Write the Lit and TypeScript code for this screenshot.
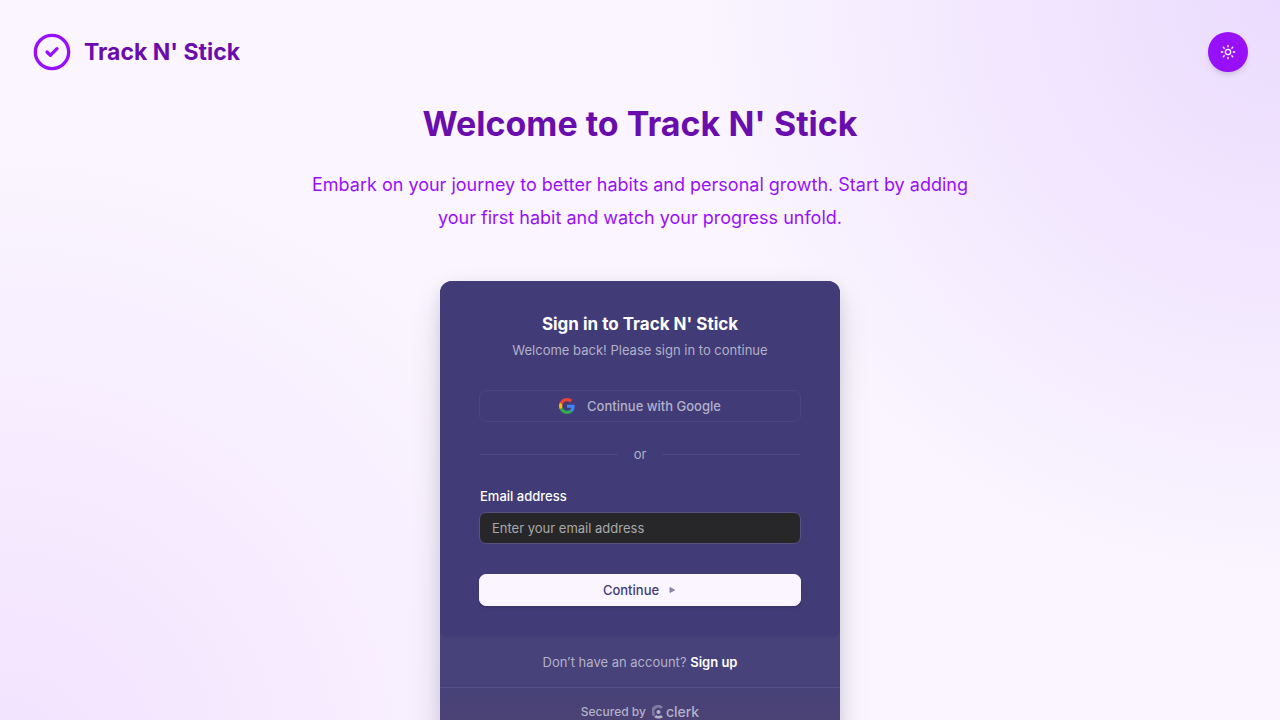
import { LitElement, html, css, svg } from "lit";
import { customElement, state } from "lit/decorators.js";

const checkLogo = svg`<svg class="logo" viewBox="0 0 24 24" fill="none" stroke="currentColor" stroke-width="2" stroke-linecap="round" stroke-linejoin="round" aria-hidden="true">
  <circle cx="12" cy="12" r="10"></circle><path d="m9 12 2 2 4-4"></path></svg>`;

const sun = svg`<svg class="sun" viewBox="0 0 24 24" fill="none" stroke="currentColor" stroke-width="2" stroke-linecap="round" stroke-linejoin="round" aria-hidden="true">
  <circle cx="12" cy="12" r="4"></circle>
  <path d="M12 2v2M12 20v2M4.93 4.93l1.41 1.41M17.66 17.66l1.41 1.41M2 12h2M20 12h2M6.34 17.66l-1.41 1.41M19.07 4.93l-1.41 1.41"></path></svg>`;

const google = svg`<svg class="google" viewBox="0 0 48 48" aria-hidden="true">
  <path fill="#EA4335" d="M24 9.5c3.54 0 6.71 1.22 9.21 3.6l6.85-6.85C35.9 2.38 30.47 0 24 0 14.62 0 6.51 5.38 2.56 13.22l7.98 6.19C12.43 13.72 17.74 9.5 24 9.5z"></path>
  <path fill="#4285F4" d="M46.98 24.55c0-1.57-.15-3.09-.38-4.55H24v9.02h12.94c-.58 2.96-2.26 5.48-4.78 7.18l7.73 6c4.51-4.18 7.09-10.36 7.09-17.65z"></path>
  <path fill="#FBBC05" d="M10.53 28.59c-.48-1.45-.76-2.99-.76-4.59s.27-3.14.76-4.59l-7.98-6.19C.92 16.46 0 20.12 0 24c0 3.88.92 7.54 2.56 10.78l7.97-6.19z"></path>
  <path fill="#34A853" d="M24 48c6.48 0 11.93-2.13 15.89-5.81l-7.73-6c-2.15 1.45-4.92 2.3-8.16 2.3-6.26 0-11.57-4.22-13.47-9.91l-7.98 6.19C6.51 42.62 14.62 48 24 48z"></path></svg>`;

const clerkMark = svg`<svg class="mark" viewBox="0 0 14 14" fill="currentColor" aria-hidden="true">
  <circle cx="7" cy="7" r="2.2"></circle>
  <path d="M11.6 12.1a.4.4 0 0 1 0 .6A7 7 0 0 1 7 14a7 7 0 0 1-4.300-1.300.4.4 0 0 1 0-.6l1.600-1.600a.5.5 0 0 1 .6 0A4.300 4.300 0 0 0 7 11.200a4.300 4.300 0 0 0 2.300-.7.5.5 0 0 1 .6 0z"></path>
  <path opacity=".5" d="M11.600 1.300a.4.4 0 0 1 0 .6L10 3.500a.5.5 0 0 1-.6 0 4.200 4.200 0 0 0-5.900 5.900.5.5 0 0 1 0 .6l-1.600 1.600a.4.4 0 0 1-.6 0A7 7 0 0 1 11.600 1.300z"></path></svg>`;

@customElement("app-root")
export class AppRoot extends LitElement {
  @state() private email = "";

  static styles = css`
    :host {
      display: block;
      min-height: 100vh;
      box-sizing: border-box;
      padding: 32px;
      overflow: hidden;
      font-family: Inter, "Open Sans", sans-serif;
      color: #6a0dad;
      background:
        radial-gradient(circle at 100% 0, #ebdbfe, rgba(250, 245, 255, 0) 580px),
        radial-gradient(circle at 0 100%, #f2e2fe, rgba(250, 245, 255, 0) 620px),
        #faf5ff;
    }
    * { box-sizing: border-box; }
    button, input { font: inherit; }
    a { color: inherit; text-decoration: none; }
    header {
      display: flex;
      align-items: center;
      justify-content: space-between;
      height: 40px;
    }
    .brand {
      display: flex;
      align-items: center;
      gap: 12px;
      font-size: 23px;
      line-height: 32px;
      font-weight: 700;
    }
    .logo { width: 40px; height: 40px; color: #9810fa; }
    .theme {
      display: grid;
      place-items: center;
      width: 40px;
      height: 40px;
      padding: 0;
      border: 0;
      border-radius: 50%;
      color: #fff;
      background: #9810fa;
      box-shadow: 0 4px 6px -1px rgba(0, 0, 0, 0.1), 0 2px 4px -2px rgba(0, 0, 0, 0.1);
    }
    .sun { width: 16px; height: 16px; }
    .intro {
      max-width: 720px;
      margin: 32px auto 47px;
      text-align: center;
    }
    h1 { margin: 0 0 24px; font-size: 34px; line-height: 40px; font-weight: 700; }
    .intro p {
      max-width: 690px;
      margin: 0 auto;
      font-size: 18px;
      line-height: 33px;
      color: #9810fa;
    }
    .card {
      max-width: 400px;
      margin: 0 auto;
      border-radius: 12px;
      overflow: hidden;
      font-size: 13px;
      line-height: 18px;
      color: #b3b1c8;
      background: #47427a;
      box-shadow: 0 5px 15px rgba(0, 0, 0, 0.08), 0 15px 35px -5px rgba(25, 28, 33, 0.2);
    }
    .panel {
      display: flex;
      flex-direction: column;
      padding: 32px 39px 31px;
      border-radius: 0 0 8px 8px;
      background: #413c77;
      box-shadow: 0 0 2px rgba(0, 0, 0, 0.08);
    }
    .heading { text-align: center; margin-bottom: 31px; }
    h2 { margin: 0 0 6px; font-size: 17px; line-height: 22px; font-weight: 700; color: #fff; }
    .heading p { margin: 0; }
    .action {
      display: flex;
      align-items: center;
      justify-content: center;
      height: 32px;
      border: 1px solid #4b4680;
      border-radius: 7px;
      padding: 0;
      font-weight: 500;
    }
    .social { gap: 12px; color: #b3b1c8; background: transparent; }
    .google { width: 16px; height: 16px; }
    .divider { display: flex; align-items: center; gap: 16px; margin: 23px 1px 24px; }
    .divider::before, .divider::after { content: ""; flex: 1; height: 1px; background: #4d4882; }
    label { margin: 0 1px 7px; font-weight: 500; color: #fff; }
    input {
      width: 100%;
      height: 32px;
      padding: 0 12px;
      border: 1px solid #57527f;
      border-radius: 7px;
      color: #fff;
      background: #27272a;
      outline: 0;
    }
    input::placeholder { color: #a9a9aa; opacity: 1; }
    .submit {
      gap: 8px;
      margin-top: 30px;
      color: #413c77;
      border-color: #faf5ff;
      background: #faf5ff;
      box-shadow: 0 2px 3px rgba(0, 0, 0, 0.12);
    }
    .arrow { width: 10px; height: 10px; opacity: 0.62; }
    .signup { padding: 16px 32px; text-align: center; }
    .signup a { font-weight: 600; color: #fff; }
    .secured {
      display: flex;
      align-items: center;
      justify-content: center;
      gap: 6px;
      padding: 15px 32px;
      border-top: 1px solid #544f87;
      font-size: 12px;
      font-weight: 500;
      background: linear-gradient(#47427a, #4c4274 32px);
    }
    .clerk { display: flex; align-items: center; gap: 1px; font-size: 14px; }
    .mark { width: 13px; height: 14px; }
  `;

  private onEmail(e: Event) {
    this.email = (e.target as HTMLInputElement).value;
  }

  render() {
    return html`
      <header>
        <a class="brand" href="#">${checkLogo}<span>Track N' Stick</span></a>
        <button class="theme" type="button" aria-label="Toggle theme">${sun}</button>
      </header>
      <main>
        <section class="intro">
          <h1>Welcome to Track N' Stick</h1>
          <p>Embark on your journey to better habits and personal growth. Start by adding your first habit and watch your progress unfold.</p>
        </section>
        <section class="card">
          <form class="panel" @submit=${(e: Event) => e.preventDefault()}>
            <div class="heading">
              <h2>Sign in to Track N' Stick</h2>
              <p>Welcome back! Please sign in to continue</p>
            </div>
            <button class="action social" type="button">${google}<span>Continue with Google</span></button>
            <div class="divider">or</div>
            <label for="email">Email address</label>
            <input id="email" type="email" placeholder="Enter your email address" .value=${this.email} @input=${this.onEmail} />
            <button class="action submit" type="submit">
              <span>Continue</span>
              <svg class="arrow" viewBox="0 0 10 10" aria-hidden="true"><path fill="currentColor" stroke="currentColor" stroke-linejoin="round" d="M3 2.500v5L7.500 5z"></path></svg>
            </button>
          </form>
          <div class="signup">Don’t have an account? <a href="#">Sign up</a></div>
          <div class="secured"><span>Secured by</span><a class="clerk" href="#">${clerkMark}<span>clerk</span></a></div>
        </section>
      </main>
    `;
  }
}
